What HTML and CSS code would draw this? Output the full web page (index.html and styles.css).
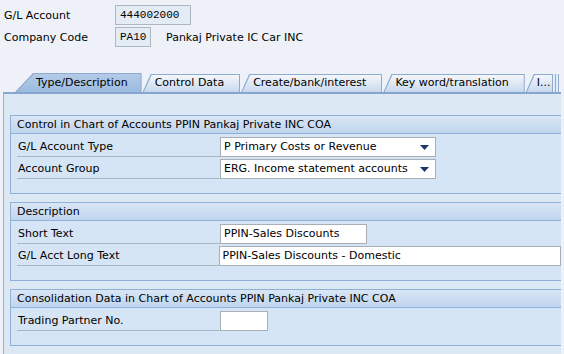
FILE: index.html
```html
<!DOCTYPE html>
<html>
<head>
<meta charset="utf-8">
<link rel="stylesheet" href="styles.css">
</head>
<body>
<div class="top">
  <div class="frow"><span class="flabel">G/L Account</span><span class="tin w76">444002000</span></div>
  <div class="frow"><span class="flabel">Company Code</span><span class="tin w36">PA10</span><span class="fdesc">Pankaj Private IC Car INC</span></div>
</div>
<div class="tabs">
  <div class="tab sel">Type/Description</div>
  <div class="tab">Control Data</div>
  <div class="tab">Create/bank/interest</div>
  <div class="tab">Key word/translation</div>
  <div class="tab more">I...</div>
</div>
<div class="panel">
  <section class="group">
    <div class="ghead">Control in Chart of Accounts PPIN Pankaj Private INC COA</div>
    <div class="gbody">
      <div class="row"><span class="lbl">G/L Account Type</span><span class="inp dd w216">P Primary Costs or Revenue<svg class="arr" width="9" height="5" viewBox="0 0 9 5"><path d="M0 0H9L4.5 5Z" fill="#1c3867"/></svg></span></div>
      <div class="row"><span class="lbl">Account Group</span><span class="inp dd w216">ERG. Income statement accounts<svg class="arr" width="9" height="5" viewBox="0 0 9 5"><path d="M0 0H9L4.5 5Z" fill="#1c3867"/></svg></span></div>
    </div>
  </section>
  <section class="group">
    <div class="ghead">Description</div>
    <div class="gbody">
      <div class="row"><span class="lbl">Short Text</span><span class="inp w147">PPIN-Sales Discounts</span></div>
      <div class="row"><span class="lbl">G/L Acct Long Text</span><span class="inp wlong">PPIN-Sales Discounts - Domestic</span></div>
    </div>
  </section>
  <section class="group">
    <div class="ghead">Consolidation Data in Chart of Accounts PPIN Pankaj Private INC COA</div>
    <div class="gbody">
      <div class="row"><span class="lbl">Trading Partner No.</span><span class="inp w48"></span></div>
    </div>
  </section>
</div>
</body>
</html>
```
FILE: styles.css
```css
html, body {
  margin: 0;
  padding: 0;
  background: #eef2f8;
  width: 564px;
  height: 354px;
  overflow: hidden;
}
body {
  font-family: "DejaVu Sans", sans-serif;
  font-size: 11px;
  color: #000;
}
.top {
  padding: 5px 0 0 4px;
  display: flex;
  flex-direction: column;
  gap: 2px;
}
.frow {
  display: flex;
  align-items: center;
  height: 20px;
}
.flabel {
  width: 111px;
}
.tin {
  box-sizing: border-box;
  height: 20px;
  line-height: 18px;
  border: 1px solid #aeb6c1;
  background: #e3ebf5;
  font-family: "Liberation Mono", monospace;
  font-size: 11px;
  padding-left: 4px;
}
.w76 { width: 76px; }
.w36 { width: 36px; }
.fdesc { margin-left: 15px; }

.tabs {
  display: flex;
  align-items: flex-end;
  margin-top: 25px;
  padding-left: 15px;
  height: 20px;
}
.tab {
  position: relative;
  isolation: isolate;
  height: 18px;
  line-height: 18px;
  padding: 0 16px 0 12px;
  margin-right: 1px;
  white-space: nowrap;
}
.tab::before,
.tab::after {
  content: "";
  position: absolute;
  z-index: -1;
}
.tab::before {
  inset: 0;
  background: #8eabd2;
  clip-path: polygon(8px 0, 100% 0, 100% 100%, 0 100%);
}
.tab::after {
  inset: 1px 1px 0 0;
  background: linear-gradient(#f4f7fb, #c8d9ee);
  clip-path: polygon(9px 0, 100% 0, 100% 100%, 1.2px 100%);
}
.tab.sel {
  height: 19px;
  line-height: 20px;
  padding: 0 14px 0 21px;
}
.tab.sel::before {
  clip-path: polygon(18px 0, 100% 0, 100% 100%, 0 100%);
}
.tab.sel::after {
  background: linear-gradient(#b4cbe8, #9cbbe0);
  clip-path: polygon(19px 0, 100% 0, 100% 100%, 1.4px 100%);
}
.tab.more {
  padding: 0 3px 0 11px;
  box-shadow: 2px 0 0 #e4ecf6, 3px 0 0 #8eabd2, 5px 0 0 #e4ecf6, 6px 0 0 #8eabd2;
}

.panel {
  margin-left: 3px;
  width: 558px;
  height: 262px;
  box-sizing: border-box;
  border-top: 2px solid #86a6d0;
  border-left: 1px solid #96b2d8;
  background: #dde8f5;
  padding: 21px 0 0 6px;
  overflow: hidden;
}
.group {
  border: 1px solid #8fb0d8;
  border-right: none;
  background: #d5e5f5;
  margin-bottom: 8px;
}
.ghead {
  height: 17px;
  line-height: 17px;
  padding-left: 6px;
  border-bottom: 1px solid #8fb0d8;
  background: linear-gradient(#d9e6f4, #c0d5ee);
  white-space: nowrap;
}
.gbody {
  padding: 3px 0 14px 6px;
  display: flex;
  flex-direction: column;
  gap: 2px;
}
.row {
  display: flex;
  height: 20px;
}
.lbl {
  box-sizing: border-box;
  width: 203px;
  padding-left: 1px;
  line-height: 20px;
  border-bottom: 1px solid #a9b6c6;
}
.inp {
  box-sizing: border-box;
  height: 20px;
  line-height: 18px;
  border: 1px solid #a9afb7;
  background: #fff;
  padding-left: 3px;
  white-space: nowrap;
  position: relative;
}
.dd { display: flex; align-items: center; justify-content: space-between; padding-right: 6px; }
.arr { flex: none; }
.w216 { width: 216px; }
.w147 { width: 147px; }
.wlong { width: 345px; }
.w48 { width: 48px; }
```
